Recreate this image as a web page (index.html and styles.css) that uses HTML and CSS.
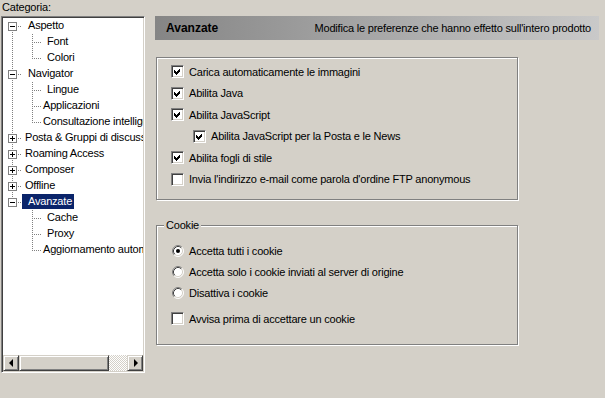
FILE: index.html
```html
<!DOCTYPE html>
<html>
<head>
    <title>Preferenze - Avanzate</title>
    <meta charset="utf-8">
    <link rel="stylesheet" href="styles.css">
</head>
<body>
    <div class="dialog">
        <!-- Category tree -->
        <div class="sidebar">
            <div class="caption">Categoria:</div>
            <div class="tree">
                <div class="tree-rows">
                    <div class="row">
                        <span class="cell root first"><svg class="toggle" width="9" height="9"><rect x=".5" y=".5" width="8" height="8" fill="#fff" stroke="#808080"/><path d="M2 4.5h5" stroke="#000"/></svg></span>
                        <span class="label sp">Aspetto</span>
                    </div>
                    <div class="row">
                        <span class="gutter pipe"></span><span class="cell tee"></span>
                        <span class="label child sp">Font</span>
                    </div>
                    <div class="row">
                        <span class="gutter pipe"></span><span class="cell elbow"></span>
                        <span class="label child sp">Colori</span>
                    </div>
                    <div class="row">
                        <span class="cell root"><svg class="toggle" width="9" height="9"><rect x=".5" y=".5" width="8" height="8" fill="#fff" stroke="#808080"/><path d="M2 4.5h5" stroke="#000"/></svg></span>
                        <span class="label sp">Navigator</span>
                    </div>
                    <div class="row">
                        <span class="gutter pipe"></span><span class="cell tee"></span>
                        <span class="label child sp">Lingue</span>
                    </div>
                    <div class="row">
                        <span class="gutter pipe"></span><span class="cell tee"></span>
                        <span class="label child">Applicazioni</span>
                    </div>
                    <div class="row">
                        <span class="gutter pipe"></span><span class="cell elbow"></span>
                        <span class="label child">Consultazione intelligente</span>
                    </div>
                    <div class="row">
                        <span class="cell root"><svg class="toggle" width="9" height="9"><rect x=".5" y=".5" width="8" height="8" fill="#fff" stroke="#808080"/><path d="M2 4.5h5M4.5 2v5" stroke="#000"/></svg></span>
                        <span class="label">Posta &amp; Gruppi di discussione</span>
                    </div>
                    <div class="row">
                        <span class="cell root"><svg class="toggle" width="9" height="9"><rect x=".5" y=".5" width="8" height="8" fill="#fff" stroke="#808080"/><path d="M2 4.5h5M4.5 2v5" stroke="#000"/></svg></span>
                        <span class="label">Roaming Access</span>
                    </div>
                    <div class="row">
                        <span class="cell root"><svg class="toggle" width="9" height="9"><rect x=".5" y=".5" width="8" height="8" fill="#fff" stroke="#808080"/><path d="M2 4.5h5M4.5 2v5" stroke="#000"/></svg></span>
                        <span class="label">Composer</span>
                    </div>
                    <div class="row">
                        <span class="cell root"><svg class="toggle" width="9" height="9"><rect x=".5" y=".5" width="8" height="8" fill="#fff" stroke="#808080"/><path d="M2 4.5h5M4.5 2v5" stroke="#000"/></svg></span>
                        <span class="label">Offline</span>
                    </div>
                    <div class="row">
                        <span class="cell root last"><svg class="toggle" width="9" height="9"><rect x=".5" y=".5" width="8" height="8" fill="#fff" stroke="#808080"/><path d="M2 4.5h5" stroke="#000"/></svg></span>
                        <span class="label sp selected">Avanzate</span>
                    </div>
                    <div class="row">
                        <span class="gutter"></span><span class="cell tee"></span>
                        <span class="label child sp">Cache</span>
                    </div>
                    <div class="row">
                        <span class="gutter"></span><span class="cell tee"></span>
                        <span class="label child sp">Proxy</span>
                    </div>
                    <div class="row">
                        <span class="gutter"></span><span class="cell elbow"></span>
                        <span class="label child">Aggiornamento automatico</span>
                    </div>
                </div>

                <!-- Horizontal scrollbar -->
                <div class="hscroll">
                    <span class="sbtn"><span class="arrow-left"></span></span>
                    <span class="thumb"></span>
                    <span class="track"></span>
                    <span class="sbtn"><span class="arrow-right"></span></span>
                </div>
            </div>
        </div>

        <!-- Preferences panel -->
        <div class="panel">
            <div class="banner">
                <span class="banner-title">Avanzate</span>
                <span>Modifica le preferenze che hanno effetto sull'intero prodotto</span>
            </div>

            <div class="group group-main">
                <div class="opt">
                    <span class="check"><svg width="11" height="11"><path d="M2 4L4 6L8 2V5L4 9L2 7Z" fill="#000" shape-rendering="crispEdges"/></svg></span>
                    <span>Carica automaticamente le immagini</span>
                </div>
                <div class="opt">
                    <span class="check"><svg width="11" height="11"><path d="M2 4L4 6L8 2V5L4 9L2 7Z" fill="#000" shape-rendering="crispEdges"/></svg></span>
                    <span>Abilita Java</span>
                </div>
                <div class="opt">
                    <span class="check"><svg width="11" height="11"><path d="M2 4L4 6L8 2V5L4 9L2 7Z" fill="#000" shape-rendering="crispEdges"/></svg></span>
                    <span>Abilita JavaScript</span>
                </div>
                <div class="opt sub">
                    <span class="check"><svg width="11" height="11"><path d="M2 4L4 6L8 2V5L4 9L2 7Z" fill="#000" shape-rendering="crispEdges"/></svg></span>
                    <span>Abilita JavaScript per la Posta e le News</span>
                </div>
                <div class="opt">
                    <span class="check"><svg width="11" height="11"><path d="M2 4L4 6L8 2V5L4 9L2 7Z" fill="#000" shape-rendering="crispEdges"/></svg></span>
                    <span>Abilita fogli di stile</span>
                </div>
                <div class="opt">
                    <span class="check"></span>
                    <span>Invia l'indirizzo e-mail come parola d'ordine FTP anonymous</span>
                </div>
            </div>

            <div class="group group-cookie">
                <span class="legend">Cookie</span>
                <div class="opt radio-row">
                    <svg class="radio" width="12" height="12" viewBox="0 0 12 12">
                        <circle cx="6" cy="6" r="5" fill="#fff"/>
                        <path d="M2.11 9.89A5.5 5.5 0 0 1 9.89 2.11" fill="none" stroke="#808080"/>
                        <path d="M9.89 2.11A5.5 5.5 0 0 1 2.11 9.89" fill="none" stroke="#fff"/>
                        <path d="M2.82 9.18A4.5 4.5 0 0 1 9.18 2.82" fill="none" stroke="#404040"/>
                        <path d="M9.18 2.82A4.5 4.5 0 0 1 2.82 9.18" fill="none" stroke="#d4d0c8"/>
                        <circle cx="6" cy="6" r="2" fill="#000"/>
                    </svg>
                    <span>Accetta tutti i cookie</span>
                </div>
                <div class="opt radio-row">
                    <svg class="radio" width="12" height="12" viewBox="0 0 12 12">
                        <circle cx="6" cy="6" r="5" fill="#fff"/>
                        <path d="M2.11 9.89A5.5 5.5 0 0 1 9.89 2.11" fill="none" stroke="#808080"/>
                        <path d="M9.89 2.11A5.5 5.5 0 0 1 2.11 9.89" fill="none" stroke="#fff"/>
                        <path d="M2.82 9.18A4.5 4.5 0 0 1 9.18 2.82" fill="none" stroke="#404040"/>
                        <path d="M9.18 2.82A4.5 4.5 0 0 1 2.82 9.18" fill="none" stroke="#d4d0c8"/>
                    </svg>
                    <span>Accetta solo i cookie inviati al server di origine</span>
                </div>
                <div class="opt radio-row">
                    <svg class="radio" width="12" height="12" viewBox="0 0 12 12">
                        <circle cx="6" cy="6" r="5" fill="#fff"/>
                        <path d="M2.11 9.89A5.5 5.5 0 0 1 9.89 2.11" fill="none" stroke="#808080"/>
                        <path d="M9.89 2.11A5.5 5.5 0 0 1 2.11 9.89" fill="none" stroke="#fff"/>
                        <path d="M2.82 9.18A4.5 4.5 0 0 1 9.18 2.82" fill="none" stroke="#404040"/>
                        <path d="M9.18 2.82A4.5 4.5 0 0 1 2.82 9.18" fill="none" stroke="#d4d0c8"/>
                    </svg>
                    <span>Disattiva i cookie</span>
                </div>
                <div class="opt radio-row spaced">
                    <span class="check"></span>
                    <span>Avvisa prima di accettare un cookie</span>
                </div>
            </div>
        </div>
    </div>
</body>
</html>
```

FILE: styles.css
```css
:root {
    --face: #d4d0c8;
    --shadow: #808080;
    --dark: #404040;
    --select: #0a246a;
    --vdots: repeating-linear-gradient(to bottom, #808080 0 1px, transparent 1px 2px);
    --hdots: repeating-linear-gradient(to right, #808080 0 1px, transparent 1px 2px);
}

body {
    margin: 0;
    background: var(--face);
    font-family: "Liberation Sans", Arial, sans-serif;
    font-size: 11px;
    letter-spacing: -0.2px;
    color: #000;
}

.dialog {
    display: flex;
    gap: 10px;
    height: 398px;
    overflow: hidden;
}

/* Sidebar / tree */
.sidebar {
    width: 144px;
    padding-left: 1px;
    display: flex;
    flex-direction: column;
}

.caption {
    height: 16px;
    line-height: 14px;
    padding-left: 1px;
}

.tree {
    height: 357px;
    box-sizing: border-box;
    border: 1px solid;
    border-color: var(--shadow) #fff #fff var(--shadow);
    box-shadow: inset 1px 1px 0 var(--dark), inset -1px -1px 0 var(--face);
    background: #fff;
    padding: 1px;
    display: flex;
    flex-direction: column;
}

.tree-rows {
    flex: 1;
    padding-left: 1px;
    overflow: hidden;
}

.row {
    display: flex;
    height: 16px;
    white-space: nowrap;
}

.cell {
    flex: none;
    width: 18px;
    height: 16px;
    box-sizing: border-box;
    padding: 4px 0 0 4px;
}

.gutter {
    flex: none;
    width: 20px;
    height: 16px;
}

.toggle {
    display: block;
}

.pipe {
    background: var(--vdots) 8px 0 / 1px 100% no-repeat;
}

.tee {
    background: var(--hdots) 10px 8px / 8px 1px no-repeat,
                var(--vdots) 8px 0 / 1px 100% no-repeat;
}

.elbow {
    background: var(--hdots) 10px 8px / 8px 1px no-repeat,
                var(--vdots) 8px 0 / 1px 9px no-repeat;
}

.root {
    background: var(--hdots) 14px 8px / 4px 1px no-repeat,
                var(--vdots) 8px 0 / 1px 100% no-repeat;
}

.root.first {
    background: var(--hdots) 14px 8px / 4px 1px no-repeat,
                var(--vdots) 8px 8px / 1px 8px no-repeat;
}

.root.last {
    background: var(--hdots) 14px 8px / 4px 1px no-repeat,
                var(--vdots) 8px 0 / 1px 8px no-repeat;
}

.label {
    height: 15px;
    line-height: 15px;
    padding: 0 2px 0 3px;
}

.label.sp {
    padding-left: 6px;
}

.label.child {
    padding-left: 1px;
}

.label.child.sp {
    padding-left: 5px;
}

.label.selected {
    background: var(--select);
    color: #fff;
}

/* Scrollbar */
.hscroll {
    display: flex;
    height: 16px;
    flex: none;
}

.sbtn,
.thumb {
    box-sizing: border-box;
    height: 16px;
    background: var(--face);
    border: 1px solid;
    border-color: var(--face) var(--dark) var(--dark) var(--face);
    box-shadow: inset 1px 1px 0 #fff, inset -1px -1px 0 var(--shadow);
}

.sbtn {
    width: 16px;
    display: flex;
    align-items: center;
    justify-content: center;
}

.thumb {
    width: 90px;
}

.track {
    flex: 1;
    background: repeating-conic-gradient(#fff 0 25%, var(--face) 0 50%) 0 0 / 2px 2px;
}

.arrow-left {
    border-top: 4px solid transparent;
    border-bottom: 4px solid transparent;
    border-right: 4px solid #000;
}

.arrow-right {
    border-top: 4px solid transparent;
    border-bottom: 4px solid transparent;
    border-left: 4px solid #000;
    margin-left: 1px;
}

/* Right panel */
.panel {
    width: 444px;
    padding-top: 16px;
}

.banner {
    height: 24px;
    display: flex;
    align-items: center;
    justify-content: space-between;
    padding: 0 8px 0 11px;
    background: linear-gradient(to right, #858585, #c9c9c9);
}

.banner-title {
    font-weight: bold;
    font-size: 12px;
    letter-spacing: 0;
}

.group {
    position: relative;
    box-sizing: border-box;
    width: 362px;
    margin-left: 1px;
    border: 1px solid var(--shadow);
    box-shadow: 1px 1px 0 #fff, inset 1px 1px 0 #fff;
}

.group-main {
    margin-top: 17px;
    height: 143px;
    padding: 3px 0 0 14px;
}

.group-cookie {
    margin-top: 25px;
    height: 120px;
    padding: 14px 0 0 14px;
}

.legend {
    position: absolute;
    top: -7px;
    left: 7px;
    padding: 0 2px;
    line-height: 13px;
    background: var(--face);
}

.opt {
    display: flex;
    align-items: center;
    gap: 5px;
    height: 21.5px;
    white-space: nowrap;
}

.opt.sub {
    padding-left: 22px;
}

.radio-row {
    height: 21px;
}

.radio-row.spaced {
    margin-top: 5px;
}

.radio {
    flex: none;
    display: block;
    margin-left: 1px;
}

.check {
    flex: none;
    width: 13px;
    height: 13px;
    box-sizing: border-box;
    border: 1px solid;
    border-color: var(--shadow) #fff #fff var(--shadow);
    box-shadow: inset 1px 1px 0 var(--dark), inset -1px -1px 0 var(--face);
    background: #fff;
}

.check svg {
    display: block;
}
```
